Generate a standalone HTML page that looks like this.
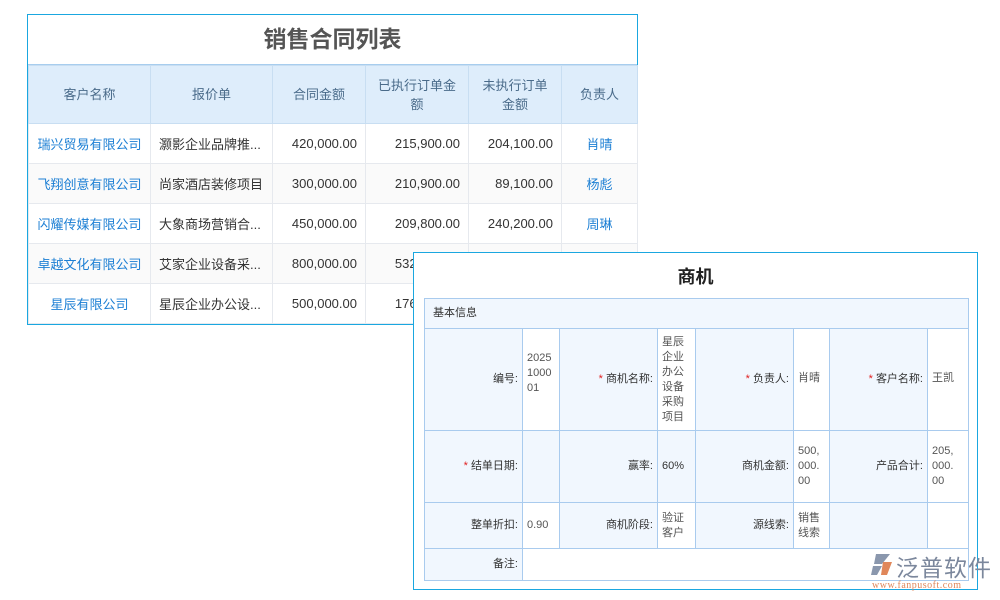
<!DOCTYPE html>
<html><head><meta charset="utf-8"><style>
*{margin:0;padding:0;box-sizing:border-box}
body{width:1000px;height:600px;background:#fff;position:relative;overflow:hidden;font-family:"Liberation Sans","Noto Sans CJK SC",sans-serif}
.p1{position:absolute;left:27px;top:14px;width:611px;height:311px;border:1px solid #1aa7e0;background:#fff}
.p1 h1{height:50px;line-height:48px;text-align:center;font-size:23px;color:#555;font-weight:bold;border-bottom:1px solid #a7cdee}
table{border-collapse:collapse;table-layout:fixed}
.t1 td{border:1px solid #e6e9ee;font-size:13px;color:#333;height:40px;padding:0 8px;white-space:nowrap;overflow:hidden}
.t1 tr.h td{background:#deedfb;color:#4a6b8a;height:58px;text-align:center;border-color:#c8def2;white-space:normal;line-height:19px;font-size:13px}
.t1 tr:nth-child(odd) td{background:#fafafa}
.t1 tr.h td{background:#deedfb}
.t1 td.b{color:#1c7fd4;text-align:center;padding:0 4px}
.r{text-align:right}
.p2{position:absolute;left:413px;top:252px;width:565px;height:338px;border:1px solid #1aa7e0;background:#fff}
.p2 h2{position:absolute;left:0;width:100%;top:10px;text-align:center;font-size:18px;font-weight:bold;color:#222}
.t2{position:absolute;left:10px;top:45px}
.t2 td{border:1px solid #a9cbee;font-size:11px;color:#555;padding:0 4px;line-height:15px;vertical-align:middle;word-break:break-all;overflow:hidden}
.t2 td.l{background:#f1f7fe;text-align:right;color:#333}
.t2 td.v{background:#fff}
.t2 td.hd{background:#f1f7fe;height:30px;color:#333;text-align:left;padding-left:8px}
.s{color:#e02020}
</style></head><body>
<div class="p1"><h1>销售合同列表</h1>
<table class="t1" style="width:609px">
<colgroup><col style="width:122px"><col style="width:122px"><col style="width:93px"><col style="width:103px"><col style="width:93px"><col style="width:76px"></colgroup>
<tr class="h"><td>客户名称</td><td>报价单</td><td>合同金额</td><td>已执行订单金额</td><td>未执行订单金额</td><td>负责人</td></tr>
<tr><td class="b">瑞兴贸易有限公司</td><td>灏影企业品牌推...</td><td class="r">420,000.00</td><td class="r">215,900.00</td><td class="r">204,100.00</td><td class="b">肖晴</td></tr>
<tr><td class="b">飞翔创意有限公司</td><td>尚家酒店装修项目</td><td class="r">300,000.00</td><td class="r">210,900.00</td><td class="r">89,100.00</td><td class="b">杨彪</td></tr>
<tr><td class="b">闪耀传媒有限公司</td><td>大象商场营销合...</td><td class="r">450,000.00</td><td class="r">209,800.00</td><td class="r">240,200.00</td><td class="b">周琳</td></tr>
<tr><td class="b">卓越文化有限公司</td><td>艾家企业设备采...</td><td class="r">800,000.00</td><td class="r">532,000.00</td><td class="r">268,000.00</td><td class="b">王凯</td></tr>
<tr><td class="b">星辰有限公司</td><td>星辰企业办公设...</td><td class="r">500,000.00</td><td class="r">176,000.00</td><td class="r">324,000.00</td><td class="b">肖晴</td></tr>
</table></div>
<div class="p2"><h2>商机</h2>
<table class="t2" style="width:544px">
<colgroup><col style="width:98px"><col style="width:37px"><col style="width:98px"><col style="width:38px"><col style="width:98px"><col style="width:36px"><col style="width:98px"><col style="width:41px"></colgroup>
<tr><td class="hd" colspan="8">基本信息</td></tr>
<tr style="height:102px"><td class="l">编号:</td><td class="v" style="vertical-align:top;padding-top:22px">2025<br>1000<br>01</td><td class="l"><span class="s">* </span>商机名称:</td><td class="v">星辰企业办公设备采购项目</td><td class="l"><span class="s">* </span>负责人:</td><td class="v" style="vertical-align:top;padding-top:42px">肖晴</td><td class="l"><span class="s">* </span>客户名称:</td><td class="v" style="vertical-align:top;padding-top:42px">王凯</td></tr>
<tr style="height:72px"><td class="l"><span class="s">* </span>结单日期:</td><td class="l"></td><td class="l">赢率:</td><td class="l" style="text-align:left;vertical-align:top;padding-top:28px">60%</td><td class="l">商机金额:</td><td class="v">500,<br>000.<br>00</td><td class="l">产品合计:</td><td class="v">205,<br>000.<br>00</td></tr>
<tr style="height:46px"><td class="l">整单折扣:</td><td class="v">0.90</td><td class="l">商机阶段:</td><td class="v">验证客户</td><td class="l">源线索:</td><td class="v">销售线索</td><td class="l"></td><td class="v"></td></tr>
<tr style="height:32px"><td class="l">备注:</td><td class="v" colspan="7"></td></tr>
</table></div>
<svg style="position:absolute;left:870px;top:553px" width="24" height="23" viewBox="0 0 24 23"><path d="M6 1h14l-8 10H4z" fill="#8a97ad"/><path d="M3 13h9l-5 9H1z" fill="#8a97ad"/><path d="M13 9h9l-5 13h-6z" fill="#e0875a"/></svg>
<div style="position:absolute;left:896px;top:549px;font-size:23px;color:#7b879c;letter-spacing:1px;font-family:'Noto Sans CJK SC',sans-serif">泛普软件</div>
<div style="position:absolute;left:872px;top:580px;font-size:10px;color:#e0875a;font-family:'Liberation Serif',serif;letter-spacing:0.5px">www.fanpusoft.com</div>
</body></html>
